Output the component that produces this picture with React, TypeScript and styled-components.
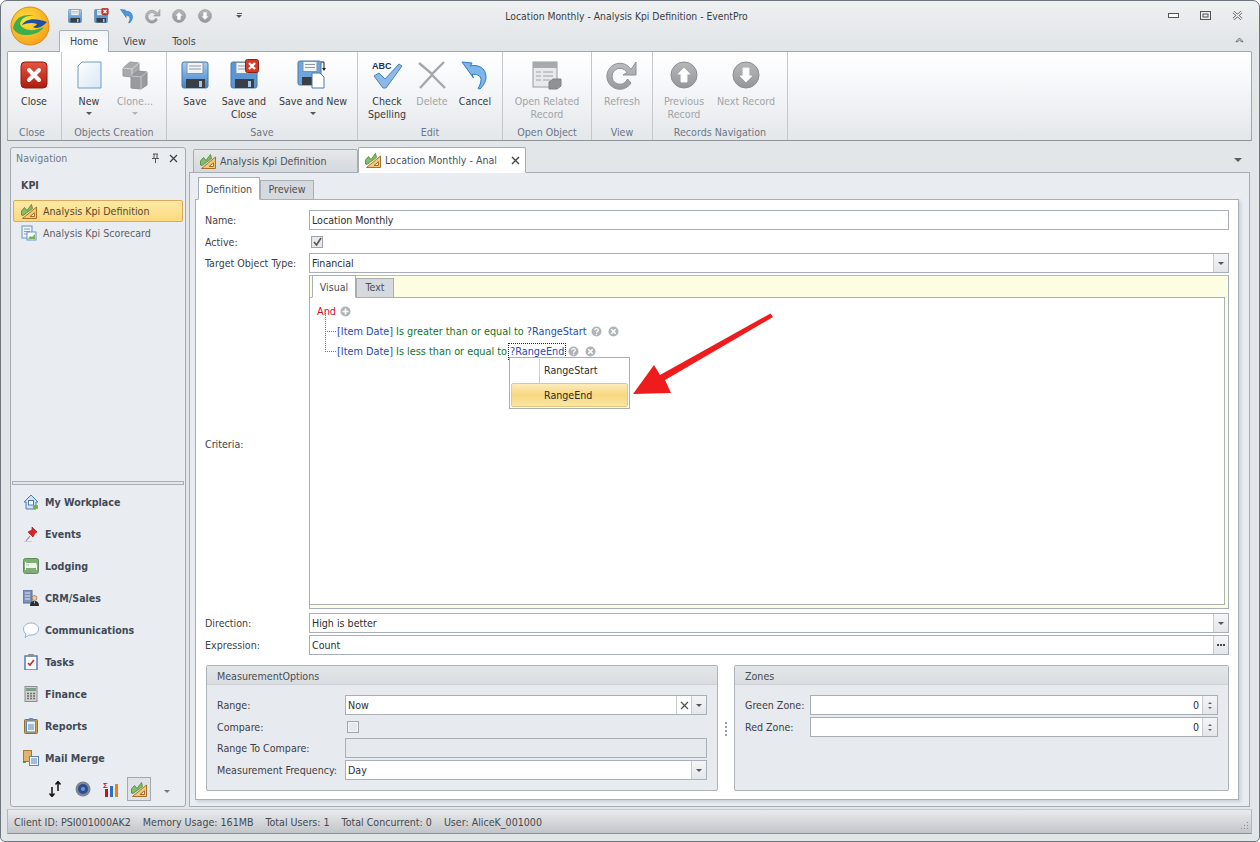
import React from "react";
import styled, { createGlobalStyle } from "styled-components";

const Global = createGlobalStyle`
  html, body { margin: 0; padding: 0; background: #fff; }
  body { font-family: "DejaVu Sans", "Liberation Sans", Arial, sans-serif; font-stretch: condensed; font-size: 10.6px; color: #3c3c3c; }
  * { box-sizing: border-box; }
`;

const Window = styled.div`
  position: relative; width: 1260px; height: 842px; overflow: hidden; display: flex; flex-direction: column;
  background: linear-gradient(#eef0f1 0, #e3e6e9 40px); border: 1px solid #6f757c; border-radius: 7px 7px 5px 5px;
`;
const TitleBar = styled.div`
  height: 29px; flex: none; display: grid; grid-template-columns: 1fr auto 1fr; align-items: center; padding-right: 7px;
`;
const Quick = styled.div`display: flex; align-items: center; gap: 10px; padding-left: 66px;`;
const QuickSlot = styled.span`width: 16px; height: 16px; display: block; & > svg { display: block; }`;
const QuickMenu = styled.span`
  margin-left: 8px; width: 16px; height: 16px; display: flex; flex-direction: column; align-items: center; justify-content: center; gap: 1px;
  &::before { content: ""; width: 5px; height: 1px; background: #555; }
  &::after { content: ""; border: 3px solid transparent; border-top-color: #555; border-bottom: 0; }
`;
const Title = styled.div`color: #3e3e3e; text-align: center; font-size: 10.3px;`;
const WinButtons = styled.div`display: flex; justify-content: flex-end; gap: 21px; padding-right: 9px; align-items: center;`;
const Logo = styled.svg`position: absolute; left: 9px; top: 5px; width: 40px; height: 40px;`;

const TabStrip = styled.div`
  height: 21px; flex: none; display: flex; padding-left: 58px; padding-right: 15px; position: relative; z-index: 1;
`;
const RibbonTab = styled.div<{ $on?: boolean; $w: number }>`
  width: ${p => p.$w}px; text-align: center; line-height: 23px; height: ${p => (p.$on ? 22 : 21)}px; color: #3b4654;
  ${p => p.$on && "background: linear-gradient(#f2f4f6, #fff); border: 1px solid #a9afb6; border-bottom: 0; border-radius: 2px 2px 0 0; line-height: 21px;"}
`;
const Collapse = styled.svg`margin-left: auto; margin-top: 6px;`;
const Ribbon = styled.div`
  height: 90px; flex: none; margin: 0 7px 0 6px; display: flex; border: 1px solid #a3a8ae; border-bottom-color: #8f959b; border-radius: 2px 2px 0 0;
  background: linear-gradient(#fff 0, #f8f9fb 30%, #e4e7ea 100%);
`;
const Group = styled.div<{ $w: number; $first?: boolean }>`
  width: ${p => p.$w}px; flex: none; display: flex; flex-direction: column; border-right: 1px solid #c4c8cd;
  padding-left: ${p => (p.$first ? 0 : 5)}px;
`;
const GroupButtons = styled.div`display: flex; height: 73px; flex: none;`;
const GroupLabel = styled.div`height: 14px; text-align: center; color: #6a7686; line-height: 14px; margin-left: -5px;`;
const BigButton = styled.div<{ $w: number; $off?: boolean }>`
  width: ${p => p.$w}px; flex: none; display: flex; flex-direction: column; align-items: center; padding-top: 7px;
  color: ${p => (p.$off ? "#a1a4a8" : "#3a3a3a")}; line-height: 13px; text-align: center;
`;
const BigIcon = styled.div`width: 32px; height: 32px; margin-bottom: 4px; & > svg { display: block; }`;
const DropCaret = styled.span<{ $off?: boolean; $c?: string }>`
  display: block; width: 0; height: 0; margin-top: 4px; border: 3px solid transparent; border-bottom: 0; border-top-color: ${p => p.$c || (p.$off ? "#b0b3b7" : "#555")};
`;

const Middle = styled.div`flex: 1; min-height: 0; display: flex; padding: 6px 9px 2px 9px; gap: 3px;`;
const NavPanel = styled.div`
  width: 176px; flex: none; display: flex; flex-direction: column; background: #e9ecf1; border: 1px solid #a5abb2; border-radius: 3px;
`;
const NavHead = styled.div`height: 20px; display: flex; align-items: center; padding: 0 7px 0 5px; gap: 9px; color: #727b87;`;
const NavTitle = styled.span`flex: 1;`;
const NavCategory = styled.div`font-weight: bold; color: #44494f; padding: 10px 0 0 10px; height: 32px; line-height: 15px;`;
const NavItem = styled.div<{ $on?: boolean }>`
  height: 22px; margin: 0 2px; display: flex; align-items: center; gap: 6px; padding-left: 7px; color: #5a5f66; border: 1px solid transparent; border-radius: 2px;
  ${p => p.$on && "background: linear-gradient(#fde9a6, #fdd97e); border-color: #d9ab55; color: #544a30;"}
`;
const NavSpacer = styled.div`flex: 1;`;
const NavSplitter = styled.div`height: 4px; margin: 0 1px 1px 1px; border: 1px solid #a9afb6; background: #e3e6ea;`;
const NavBig = styled.div`height: 32px; display: flex; align-items: center; padding-left: 12px; gap: 6px; font-weight: bold; color: #414a57; & > svg { flex: none; }`;
const NavTools = styled.div`height: 30px; display: flex; align-items: center; padding-left: 32px; gap: 4px; margin-bottom: 2px;`;
const NavToolOn = styled.span`width: 24px; height: 24px; display: flex; align-items: center; justify-content: center; border: 1px solid #a3a9b0; background: #dfe2e6;`;
const NavToolSlot = styled.span`width: 24px; height: 24px; display: flex; align-items: center; justify-content: center;`;

const Main = styled.div`flex: 1; min-width: 0; display: flex; flex-direction: column;`;
const DocTabs = styled.div`height: 26px; flex: none; display: flex; align-items: flex-end; padding-left: 4px; padding-right: 8px; position: relative; z-index: 1; margin-bottom: -1px;`;
const DocTab = styled.div<{ $on?: boolean; $w: number }>`
  width: ${p => p.$w}px; height: ${p => (p.$on ? 26 : 24)}px; display: flex; align-items: center; gap: 4px; padding-left: 6px; color: #4c5157; flex: none;
  border: 1px solid #a6acb3; border-radius: 2px 2px 0 0; background: ${p => (p.$on ? "#fff" : "linear-gradient(#e6e8ea, #d5d8dc)")};
  ${p => p.$on && "border-bottom-color: #fff;"}
`;
const TabClose = styled.svg`margin-left: auto; margin-right: 5px;`;
const Caret = styled.span`margin-left: auto; margin-bottom: 11px; width: 0; height: 0; border: 4px solid transparent; border-bottom: 0; border-top-color: #5a5f66;`;
const DocPage = styled.div`flex: 1; min-height: 0; display: flex; flex-direction: column; border: 1px solid #a6acb3; background: #e9ecf1; padding: 5px 10px 6px 5px;`;
const SubTabs = styled.div`height: 22px; flex: none; display: flex; align-items: flex-end; padding-left: 3px; margin-bottom: -1px; position: relative; z-index: 1;`;
const SubTab = styled.div<{ $on?: boolean; $w: number }>`
  width: ${p => p.$w}px; height: ${p => (p.$on ? 23 : 20)}px; text-align: center; line-height: ${p => (p.$on ? 23 : 17)}px; color: #4a5058; flex: none;
  border: 1px solid #a9afb6; background: ${p => (p.$on ? "#fff" : "#d6d9de")}; ${p => p.$on && "border-bottom-color: #fff;"}
`;
const Page = styled.div`
  flex: 1; min-height: 0; display: flex; flex-direction: column; background: #fff; border: 1px solid #a9afb6; padding: 10px 9px 9px 9px;
  box-shadow: 2px 2px 3px rgba(120,128,138,.25);
`;
const Row = styled.div<{ $h?: number; $mt?: number }>`
  display: flex; align-items: center; height: ${p => p.$h ?? 20}px; flex: none; margin-top: ${p => p.$mt ?? 0}px;
`;
const Label = styled.div<{ $w?: number; $pt?: number }>`width: ${p => p.$w ?? 104}px; flex: none; color: #3e4145; padding-top: ${p => p.$pt ?? 0}px;`;
const Field = styled.div<{ $off?: boolean }>`
  flex: 1; min-width: 0; height: 20px; display: flex; align-items: stretch; border: 1px solid #a9afb6; background: ${p => (p.$off ? "#e6e9ed" : "#fff")};
`;
const Value = styled.div<{ $right?: boolean }>`flex: 1; line-height: 18px; padding: 0 ${p => (p.$right ? 3 : 2)}px; color: #2e2e2e; text-align: ${p => (p.$right ? "right" : "left")};`;
const FieldBtn = styled.div`
  width: 15px; flex: none; border-left: 1px solid #c6cbd1; background: linear-gradient(#f4f5f7, #e3e6ea); display: flex; flex-direction: column; align-items: center; justify-content: center; gap: 3px; color: #555;
`;
const FieldBtnPlain = styled(FieldBtn)`background: #fff; border-left: 1px solid #c6cbd1;`;
const BtnCaret = styled.span`width: 0; height: 0; border: 3px solid transparent; border-bottom: 0; border-top-color: #555;`;
const BtnCaretUp = styled.span`width: 0; height: 0; border: 2px solid transparent; border-top: 0; border-bottom-color: #666;`;
const BtnCaretDown = styled.span`width: 0; height: 0; border: 2px solid transparent; border-bottom: 0; border-top-color: #666;`;
const Dots = styled.div`display: flex; gap: 1px; & > i { width: 2px; height: 2px; background: #444; }`;
const Check = styled.span<{ $off?: boolean }>`
  width: 12px; height: 12px; margin-left: 2px; flex: none; border: 1px solid #9fa5ac; background: ${p => (p.$off ? "#e6e9ed" : "#e8e9eb")}; display: flex; align-items: center; justify-content: center;
  ${p => p.$off && "box-shadow: inset 0 0 0 1px #f4f5f6;"}
`;

const Criteria = styled.div`
  flex: 1; min-width: 0; height: 334px; display: flex; flex-direction: column; background: #fdfde2; border: 1px solid #a9afb6; border-top-color: #b9bdc3;
`;
const CritTabs = styled.div`height: 22px; flex: none; display: flex; align-items: flex-end; padding-left: 2px; margin-bottom: -1px; position: relative; z-index: 1;`;
const CritBody = styled.div`
  flex: 1; position: relative; margin-right: 3px; margin-bottom: 3px; background: #fff; border: 1px solid #a9afb6; padding: 3px 0 0 7px; border-left: 0;
`;
const TreeRow = styled.div<{ $child?: boolean }>`
  height: 20px; display: flex; align-items: center; white-space: pre; font-size: 10.8px; ${p => p.$child && "padding-left: 20px; position: relative;"}
  ${p => p.$child && `&::before { content: ""; position: absolute; left: 8px; top: -12px; width: 10px; height: 22px; border-left: 1px dotted #777; border-bottom: 1px dotted #777; }`}
`;
const Logic = styled.span`color: #c8102e;`;
const FieldName = styled.span`color: #2a4bb0;`;
const Op = styled.span`color: #11761f;`;
const Param = styled.span<{ $focus?: boolean }>`color: #2a4bb0; ${p => p.$focus && "outline: 1px dotted #222; outline-offset: 1px;"}`;
const TreeBtns = styled.span`display: inline-flex; align-items: center; gap: 6px; margin-left: 4px; & > svg { display: block; }`;
const Popup = styled.div`
  position: absolute; left: 199px; top: 59px; width: 121px; height: 52px; background: #fff; border: 1px solid #a9afb6; padding: 1px; display: flex; flex-direction: column; z-index: 3;
`;
const PopItem = styled.div<{ $on?: boolean }>`
  flex: none; color: #2c2c2c;
  ${p => (p.$on
    ? "height: 24px; line-height: 22px; padding-left: 32px; background: linear-gradient(#fcecbb, #f8d77f 50%, #fae6a6); border: 1px solid #eac877; border-radius: 2px;"
    : "height: 24px; line-height: 23px; padding-left: 33px; background: linear-gradient(#ccd0d5, #ccd0d5) 28px 0 / 1px 100% no-repeat;")}
`;
const Arrow = styled.svg`position: absolute; left: 318px; top: 9px; z-index: 4;`;

const Bottom = styled.div`display: flex; margin-top: 10px; margin-left: 1px; height: 126px; flex: none; align-items: stretch;`;
const Panel = styled.div<{ $w: number }>`
  width: ${p => p.$w}px; flex: none; display: flex; flex-direction: column; background: #e7eaee; border: 1px solid #aeb3ba; border-radius: 2px;
`;
const PanelHead = styled.div`height: 19px; flex: none; line-height: 20px; padding-left: 10px; color: #474d55; background: linear-gradient(#e4e7ea, #d9dde1); border-bottom: 1px solid #cdd1d6;`;
const PanelBody = styled.div`padding: 10px 10px 0 10px; display: flex; flex-direction: column; gap: 2px;`;
const Grip = styled.div`
  width: 16px; flex: none; display: flex; flex-direction: column; align-items: center; justify-content: center; gap: 2px; padding-top: 1px;
  & > i { width: 2px; height: 2px; background: #9a9fa6; }
`;

const Status = styled.div`
  height: 25px; flex: none; margin: 0 7px 7px 6px; display: flex; align-items: center; gap: 12px; padding: 0 0 0 6px; color: #454a50; position: relative;
  background: linear-gradient(#e9ebed, #c2c5c9); border: 1px solid #b3b7bc; border-bottom-color: #8d9197; border-top-color: #c5c9ce;
`;
const GripCorner = styled.svg`position: absolute; right: 2px; bottom: 1px;`;

/* ---------- icons ---------- */
const Floppy = ({ s = 32 }: { s?: number }) => (
  <svg width={s} height={s} viewBox="0 0 32 32">
    <defs><linearGradient id="fl" x1="0" y1="0" x2="0" y2="1"><stop offset="0" stopColor="#a8cdf0" /><stop offset="1" stopColor="#3f82c8" /></linearGradient></defs>
    <rect x="3" y="3" width="26" height="26" rx="2" fill="url(#fl)" stroke="#4a78a8" />
    <rect x="8" y="3.5" width="16" height="11" fill="#f2f4f6" stroke="#7d96ae" />
    <path d="M10 7h12M10 10h12" stroke="#8e9aa6" />
    <rect x="7" y="20" width="19" height="9" fill="#3a3f46" />
    <rect x="20" y="22" width="3" height="6" fill="#a8c7e6" />
  </svg>
);
const XBadge = ({ s = 14, x = 18, y = 0 }: { s?: number; x?: number; y?: number }) => (
  <g transform={`translate(${x} ${y}) scale(${s / 14})`}>
    <rect x=".5" y=".5" width="13" height="13" rx="2" fill="#d43a28" stroke="#8e1f14" />
    <path d="M4 4l6 6M10 4l-6 6" stroke="#fff" strokeWidth="2.4" />
  </g>
);
const FloppyX = ({ s = 32 }: { s?: number }) => (
  <svg width={s} height={s} viewBox="0 0 32 32">
    <rect x="3" y="3" width="26" height="26" rx="2" fill="#5b95d2" stroke="#4a78a8" />
    <rect x="8" y="3.5" width="13" height="11" fill="#f2f4f6" stroke="#7d96ae" />
    <path d="M10 7h10M10 10h10" stroke="#8e9aa6" />
    <rect x="7" y="20" width="19" height="9" fill="#3a3f46" />
    <rect x="20" y="22" width="3" height="6" fill="#a8c7e6" />
    <XBadge x={17} y={0} />
  </svg>
);
const FloppyNew = () => (
  <svg width="32" height="32" viewBox="0 0 32 32">
    <rect x="1" y="2" width="23" height="24" rx="2" fill="#6ea5dc" stroke="#4a78a8" />
    <rect x="6" y="2.5" width="14" height="10" fill="#f2f4f6" stroke="#7d96ae" />
    <path d="M8 5.500h10M8 8.500h10" stroke="#8e9aa6" />
    <rect x="5" y="18" width="15" height="8" fill="#3a3f46" />
    <path d="M15 14h8l4 4v11H15z" fill="#fff" stroke="#4a78a8" />
    <path d="M27 3v7" stroke="#222" /><path d="M25 9l2 3 2-3z" fill="#222" /><path d="M24 3h3" stroke="#222" />
  </svg>
);
const Undo = ({ s = 32, c1 = "#7cb6ea", c2 = "#2f78c6" }: { s?: number; c1?: string; c2?: string }) => (
  <svg width={s} height={s} viewBox="0 0 32 32">
    <path d="M3 3l10 1-1.500 3C19 5 27 9 27 18c0 5-3 9-6 12l-2-.5c2-3 3-6 3-9 0-4-5-6-9-5l1.500 3.500z" fill={c1} stroke={c2} strokeWidth="1" strokeLinejoin="round" />
  </svg>
);
const Redo = ({ s = 32 }: { s?: number }) => (
  <svg width={s} height={s} viewBox="0 0 32 32">
    <defs><linearGradient id="rd" x1="0" y1="0" x2="0" y2="1"><stop offset="0" stopColor="#bcbec0" /><stop offset="1" stopColor="#97999c" /></linearGradient></defs>
    <path d="M25 10.500A13 13 0 1 0 25 24l-3.500-4A8 8 0 1 1 21 13.500L17 16h13V3z" fill="url(#rd)" stroke="#8d9094" strokeLinejoin="round" />
  </svg>
);
const RoundArrow = ({ s = 32, up }: { s?: number; up?: boolean }) => (
  <svg width={s} height={s} viewBox="0 0 32 32">
    <defs><linearGradient id="ra" x1="0" y1="0" x2="0" y2="1"><stop offset="0" stopColor="#b7b8ba" /><stop offset="1" stopColor="#949699" /></linearGradient></defs>
    <circle cx="16" cy="16" r="13" fill="url(#ra)" stroke="#8b8d90" />
    <path d={up ? "M16 9l6 6H19V23h-6v-8H10z" : "M16 23l6-6H19V9h-6v8H10z"} fill="#fff" stroke="#f2f2f2" strokeLinejoin="round" />
  </svg>
);
const CloseBig = () => (
  <svg width="32" height="32" viewBox="0 0 32 32">
    <defs><linearGradient id="cb" x1="0" y1="0" x2="0" y2="1"><stop offset="0" stopColor="#e8553f" /><stop offset="1" stopColor="#ad1c10" /></linearGradient></defs>
    <rect x="3" y="3" width="26" height="26" rx="4" fill="url(#cb)" stroke="#8c1d12" />
    <path d="M11 11l10 10M21 11L11 21" stroke="#fff" strokeWidth="4" strokeLinecap="round" />
  </svg>
);
const NewDoc = () => (
  <svg width="32" height="32" viewBox="0 0 32 32">
    <defs><linearGradient id="nd" x1="0" y1="0" x2="1" y2="1"><stop offset="0" stopColor="#fff" /><stop offset="1" stopColor="#d7e6f5" /></linearGradient></defs>
    <path d="M9 3h19v26H5V7z" fill="url(#nd)" stroke="#6f9cc9" />
  </svg>
);
const Cubes = () => (
  <svg width="32" height="32" viewBox="0 0 32 32">
    <path d="M4 9l7-6 9 1v8l-7 6-9-1z" fill="#a7a9ab" stroke="#9a9c9f" />
    <path d="M4 9l9 1 7-6M13 10v8" stroke="#d6d7d9" fill="none" />
    <path d="M12 17l7-5 9 1v13l-6 4-10-1z" fill="#989a9d" stroke="#8d8f92" />
    <path d="M12 17l10 1 6-5M22 18v12" stroke="#c5c6c9" fill="none" />
  </svg>
);
const SpellText = styled.text`font: bold 9px "Liberation Sans", sans-serif; fill: #1f3558;`;
const Spell = () => (
  <svg width="32" height="32" viewBox="0 0 32 32">
    <SpellText x="1" y="10">ABC</SpellText>
    <path d="M3 17l5-3 6 6L28 5l3 2-16 22h-3z" fill="#8db9e6" stroke="#4d82bd" strokeLinejoin="round" />
  </svg>
);
const BigX = () => (
  <svg width="32" height="32" viewBox="0 0 32 32">
    <path d="M3 4l13 11L28 3M4 29l12-13 13 13" fill="none" stroke="#a5a7aa" strokeWidth="2.400" />
  </svg>
);
const Form = () => (
  <svg width="32" height="32" viewBox="0 0 32 32">
    <rect x="2" y="3" width="24" height="25" fill="#e8e9ea" stroke="#9a9c9f" />
    <rect x="2" y="3" width="24" height="6" fill="#a7a9ac" />
    <path d="M5 13h5M12 13h10M5 17h5M12 17h10M5 21h5M12 21h7" stroke="#a0a2a5" />
    <path d="M18 23l4-3h8v7l-4 3h-8z" fill="#8f9194" stroke="#7f8184" />
  </svg>
);
const Kpi = ({ s = 16 }: { s?: number }) => (
  <svg width={s} height={s} viewBox="0 0 16 16">
    <path d="M1.500 15.500L15.500 4v11.500z" fill="#f3c873" stroke="#a9702a" />
    <path d="M9 13.500l4.500-3.700v3.700z" fill="#fff3cf" stroke="#a9702a" />
    <path d="M.5 8L3.500 4.500 6 7.500 10.500 1.500 11.500 5.500 2 12.500.5 12z" fill="#86bd6c" stroke="#47852f" strokeWidth=".8" strokeLinejoin="round" />
  </svg>
);
const Scorecard = () => (
  <svg width="16" height="16" viewBox="0 0 16 16">
    <rect x="1" y="1" width="10" height="12" fill="#eaf2fb" stroke="#6b93bf" />
    <path d="M3 4h6M3 6.500h6M3 9h4" stroke="#7ea3c9" />
    <rect x="6" y="7" width="9" height="8" fill="#fff" stroke="#6b93bf" />
    <path d="M7 14l2-3 2 1 3-3v5z" fill="#76b25e" />
  </svg>
);
const House = () => (
  <svg width="16" height="16" viewBox="0 0 16 16">
    <path d="M1 8l7-7 7 7h-2v7H3V8z" fill="#cfe0f2" stroke="#4f7eb0" strokeLinejoin="round" />
    <rect x="5.500" y="6.500" width="5" height="4.500" fill="#fff" stroke="#4f7eb0" />
    <rect x="10" y="11" width="5" height="4" rx="1" fill="#6fb24f" />
  </svg>
);
const Pin = () => (
  <svg width="16" height="16" viewBox="0 0 16 16">
    <path d="M3 15l4-5" stroke="#8a8a8a" strokeWidth="1.200" />
    <path d="M9 1l5 5-2 1-2 4-5-5 4-2z" fill="#d8232a" stroke="#a51519" strokeWidth=".7" strokeLinejoin="round" />
    <path d="M1 15.500h8" stroke="#ccd0d5" />
  </svg>
);
const Bed = () => (
  <svg width="16" height="16" viewBox="0 0 16 16">
    <rect x=".5" y=".5" width="15" height="15" rx="2" fill="#7fae74" stroke="#5e8b56" />
    <rect x="2.500" y="5" width="11" height="5" fill="#eef4ec" />
    <path d="M2.500 4v8M13.500 7v5" stroke="#fff" />
    <rect x="3" y="6" width="3" height="2" fill="#cfe1ca" />
  </svg>
);
const Crm = () => (
  <svg width="16" height="16" viewBox="0 0 16 16">
    <rect x="0" y="0" width="9" height="13" fill="#7f93c2" stroke="#5b6a8f" />
    <path d="M2 3h5M2 6h5M2 9h5" stroke="#dfe5f2" />
    <circle cx="11.500" cy="8" r="2.500" fill="#f0c9a0" stroke="#6a4b2b" strokeWidth=".5" />
    <path d="M7 16c0-4 2-5 4.500-5S16 12 16 16z" fill="#2b2d33" />
    <path d="M11 11.500h1l-.5 3z" fill="#fff" />
  </svg>
);
const Bubble = () => (
  <svg width="16" height="16" viewBox="0 0 16 16">
    <path d="M8 1c4 0 7.500 2.500 7.500 6S12 13 8 13H6l-4 2.500L3 12C1.500 11 .5 9 .5 7 .5 3.500 4 1 8 1z" fill="#fff" stroke="#8fb2d6" />
  </svg>
);
const Tasks = () => (
  <svg width="16" height="16" viewBox="0 0 16 16">
    <rect x="2" y="2" width="12" height="14" fill="#fff" stroke="#4777ad" strokeWidth="1.400" />
    <rect x="5" y="0" width="6" height="3" rx="1" fill="#8e8e8e" />
    <path d="M5 9l2 2 4-5" fill="none" stroke="#c8242b" strokeWidth="1.600" />
  </svg>
);
const Calc = () => (
  <svg width="16" height="16" viewBox="0 0 16 16">
    <rect x="2" y="0.500" width="12" height="15" fill="#d0d1d2" stroke="#8c8e91" />
    <rect x="3" y="2" width="10" height="3" fill="#7f9e89" />
    <path d="M4 7.500h2M7 7.500h2M10 7.500h2M4 10h2M7 10h2M10 10h2M4 12.500h2M7 12.500h2M10 12.500h2" stroke="#6d6f72" strokeWidth="1.500" />
  </svg>
);
const Report = () => (
  <svg width="16" height="16" viewBox="0 0 16 16">
    <rect x="1.500" y="1.500" width="13" height="14" rx="1" fill="#d6a33f" stroke="#9a6f1f" />
    <rect x="3.500" y="3" width="9" height="11" fill="#eaf2fb" stroke="#5d86b6" />
    <rect x="6" y="0" width="4" height="3" fill="#6e8fb8" />
    <path d="M5 7h6M5 9h6M5 11h6" stroke="#5d86b6" />
  </svg>
);
const Mail = () => (
  <svg width="16" height="16" viewBox="0 0 16 16">
    <rect x="0.500" y="0.500" width="8" height="11" fill="#e2b36a" stroke="#a67a30" />
    <path d="M1 13v-2M0 12h3" stroke="#3f9a36" strokeWidth="1.400" />
    <rect x="6.500" y="6.500" width="9" height="9" fill="#eef4fb" stroke="#5d86b6" />
    <path d="M8 9h6M8 11h6M8 13h6" stroke="#5d86b6" />
  </svg>
);
const SortArrows = () => (
  <svg width="16" height="16" viewBox="0 0 16 16">
    <path d="M5 6v9M2.500 12.500L5 15.500l2.500-3M11 1v9M8.500 3.500L11 .5l2.500 3" fill="none" stroke="#111" strokeWidth="1.500" />
  </svg>
);
const Orb = () => (
  <svg width="16" height="16" viewBox="0 0 16 16">
    <circle cx="8" cy="8" r="7.500" fill="#7c8794" />
    <circle cx="8" cy="8" r="5" fill="#2d4d8e" />
    <circle cx="8" cy="8" r="2" fill="#6e96d8" />
  </svg>
);
const SigmaText = styled.text`font: bold 8px "Liberation Sans", sans-serif; fill: #c8141c;`;
const Sigma = () => (
  <svg width="16" height="16" viewBox="0 0 16 16">
    <SigmaText x="0" y="7">Σ</SigmaText>
    <rect x="2" y="8" width="3" height="8" fill="#c8141c" />
    <rect x="7" y="5" width="3" height="11" fill="#2f6fc0" />
    <rect x="12" y="3" width="3" height="13" fill="#ee7d1a" />
  </svg>
);
const RoundMark = ({ kind }: { kind: "plus" | "q" | "x" }) => (
  <svg width="11" height="11" viewBox="0 0 11 11">
    <circle cx="5.500" cy="5.500" r="5" fill="#b0b3b6" />
    {kind === "plus" && <path d="M5.500 2.500v6M2.500 5.500h6" stroke="#fff" strokeWidth="1.600" />}
    {kind === "x" && <path d="M3.300 3.300l4.400 4.400M7.700 3.300L3.300 7.700" stroke="#fff" strokeWidth="1.600" />}
    {kind === "q" && <path d="M3.800 4.200c0-2.200 3.500-2.200 3.500 0 0 1.400-1.800 1.300-1.800 2.600M5.500 7.800v1.200" fill="none" stroke="#fff" strokeWidth="1.300" />}
  </svg>
);
const XThin = ({ c = "#555" }: { c?: string }) => (
  <svg width="9" height="9" viewBox="0 0 9 9"><path d="M1 1l7 7M8 1L1 8" stroke={c} strokeWidth="1.300" /></svg>
);
const XOutline = () => (
  <svg width="11" height="9" viewBox="0 0 11 9">
    <path d="M1.500 1l8 7M9.500 1l-8 7" stroke="#555" strokeWidth="2.600" />
    <path d="M1.500 1l8 7M9.500 1l-8 7" stroke="#fff" strokeWidth="1.200" />
  </svg>
);

const tools = [
  { key: "s", n: <Floppy s={16} /> },
  { key: "x", n: <FloppyX s={16} /> },
  { key: "u", n: <Undo s={16} c1="#4f97dc" c2="#1f63ad" /> },
  { key: "r", n: <Redo s={16} /> },
  { key: "a", n: <RoundArrow s={16} up /> },
  { key: "d", n: <RoundArrow s={16} /> },
];

type Btn = { lines: string[]; w: number; icon: React.ReactNode; off?: boolean; drop?: boolean };
const groups: { label: string; w: number; first?: boolean; btns: Btn[] }[] = [
  { label: "Close", w: 54, first: true, btns: [{ lines: ["Close"], w: 52, icon: <CloseBig /> }] },
  { label: "Objects Creation", w: 105, btns: [
    { lines: ["New"], w: 44, icon: <NewDoc />, drop: true },
    { lines: ["Clone..."], w: 48, icon: <Cubes />, off: true, drop: true },
  ] },
  { label: "Save", w: 191, btns: [
    { lines: ["Save"], w: 46, icon: <Floppy /> },
    { lines: ["Save and", "Close"], w: 52, icon: <FloppyX /> },
    { lines: ["Save and New"], w: 86, icon: <FloppyNew />, drop: true },
  ] },
  { label: "Edit", w: 145, btns: [
    { lines: ["Check", "Spelling"], w: 48, icon: <Spell /> },
    { lines: ["Delete"], w: 42, icon: <BigX />, off: true },
    { lines: ["Cancel"], w: 44, icon: <Undo /> },
  ] },
  { label: "Open Object", w: 89, btns: [{ lines: ["Open Related", "Record"], w: 78, icon: <Form />, off: true }] },
  { label: "View", w: 61, btns: [{ lines: ["Refresh"], w: 50, icon: <Redo />, off: true }] },
  { label: "Records Navigation", w: 135, btns: [
    { lines: ["Previous", "Record"], w: 52, icon: <RoundArrow up />, off: true },
    { lines: ["Next Record"], w: 72, icon: <RoundArrow />, off: true },
  ] },
];

const navBig = [
  { t: "My Workplace", i: <House /> }, { t: "Events", i: <Pin /> }, { t: "Lodging", i: <Bed /> },
  { t: "CRM/Sales", i: <Crm /> }, { t: "Communications", i: <Bubble /> }, { t: "Tasks", i: <Tasks /> },
  { t: "Finance", i: <Calc /> }, { t: "Reports", i: <Report /> }, { t: "Mail Merge", i: <Mail /> },
];

const Combo = ({ value }: { value: string }) => (
  <Field><Value>{value}</Value><FieldBtn><BtnCaret /></FieldBtn></Field>
);
const Spin = () => (
  <Field><Value $right>0</Value><FieldBtn><BtnCaretUp /><BtnCaretDown /></FieldBtn></Field>
);

export default function App() {
  return (
    <>
      <Global />
      <Window>
        <Logo viewBox="0 0 40 40">
          <defs><radialGradient id="lg" cx=".4" cy=".35" r=".75"><stop offset="0" stopColor="#ffe23a" /><stop offset="1" stopColor="#f39a1a" /></radialGradient></defs>
          <circle cx="20" cy="20" r="19" fill="url(#lg)" stroke="#d98a1c" />
          <path d="M3 22C5 10 16 7 25 10c-8-1-14 2-15 8 3 7 14 8 24 3-5 9-26 12-31 1z" fill="#3fae49" />
          <path d="M12 19c3-6 12-8 25-3-6 6-10 7-14 5 2-1 4-2 4-3-5-2-10-1-15 1z" fill="#1f4fa5" />
        </Logo>
        <TitleBar>
          <Quick>
            {tools.map(t => <QuickSlot key={t.key}>{t.n}</QuickSlot>)}
            <QuickMenu />
          </Quick>
          <Title>Location Monthly - Analysis Kpi Definition - EventPro</Title>
          <WinButtons>
            <svg width="11" height="6" viewBox="0 0 11 6"><rect x=".5" y=".5" width="10" height="4" fill="#fff" stroke="#555" /></svg>
            <svg width="11" height="9" viewBox="0 0 11 9"><rect x=".5" y=".5" width="10" height="8" fill="none" stroke="#555" /><rect x="3" y="3" width="5" height="3" fill="none" stroke="#555" /></svg>
            <XOutline />
          </WinButtons>
        </TitleBar>
        <TabStrip>
          <RibbonTab $on $w={50}>Home</RibbonTab>
          <RibbonTab $w={51}>View</RibbonTab>
          <RibbonTab $w={48}>Tools</RibbonTab>
          <Collapse width="9" height="7" viewBox="0 0 9 7"><path d="M1 5.500l3.500-3.500L8 5.500l-1 .5-2.500-2L2 6z" fill="#fff" stroke="#444" strokeWidth=".8" /></Collapse>
        </TabStrip>
        <Ribbon>
          {groups.map(g => (
            <Group key={g.label} $w={g.w} $first={g.first}>
              <GroupButtons>
                {g.btns.map(b => (
                  <BigButton key={b.lines[0]} $w={b.w} $off={b.off}>
                    <BigIcon>{b.icon}</BigIcon>
                    {b.lines.map(l => <div key={l}>{l}</div>)}
                    {b.drop && <DropCaret $off={b.off} />}
                  </BigButton>
                ))}
              </GroupButtons>
              <GroupLabel>{g.label}</GroupLabel>
            </Group>
          ))}
        </Ribbon>
        <Middle>
          <NavPanel>
            <NavHead>
              <NavTitle>Navigation</NavTitle>
              <svg width="9" height="10" viewBox="0 0 9 10"><path d="M2 1h5M3 1v4M6 1v4M1 5.500h7M4.500 6v4" stroke="#555" fill="none" /></svg>
              <XThin c="#444" />
            </NavHead>
            <NavCategory>KPI</NavCategory>
            <NavItem $on><Kpi />Analysis Kpi Definition</NavItem>
            <NavItem><Scorecard />Analysis Kpi Scorecard</NavItem>
            <NavSpacer />
            <NavSplitter />
            {navBig.map(n => <NavBig key={n.t}>{n.i}{n.t}</NavBig>)}
            <NavTools>
              <NavToolSlot><SortArrows /></NavToolSlot>
              <NavToolSlot><Orb /></NavToolSlot>
              <NavToolSlot><Sigma /></NavToolSlot>
              <NavToolOn><Kpi /></NavToolOn>
              <NavToolSlot><DropCaret $c="#777" /></NavToolSlot>
            </NavTools>
          </NavPanel>
          <Main>
            <DocTabs>
              <DocTab $w={165}><Kpi />Analysis Kpi Definition</DocTab>
              <DocTab $on $w={168}><Kpi />Location Monthly - Anal<TabClose width="9" height="9" viewBox="0 0 9 9"><path d="M1 1l7 7M8 1L1 8" stroke="#444" strokeWidth="1.400" /></TabClose></DocTab>
              <Caret />
            </DocTabs>
            <DocPage>
              <SubTabs>
                <SubTab $on $w={62}>Definition</SubTab>
                <SubTab $w={54}>Preview</SubTab>
              </SubTabs>
              <Page>
                <Row><Label>Name:</Label><Field><Value>Location Monthly</Value></Field></Row>
                <Row $mt={2} $h={19}><Label>Active:</Label><Check>
                  <svg width="9" height="9" viewBox="0 0 9 9"><path d="M1 5l2.500 3L8 1" fill="none" stroke="#555" strokeWidth="1.600" /></svg>
                </Check></Row>
                <Row $mt={2}><Label>Target Object Type:</Label><Combo value="Financial" /></Row>
                <Row $mt={2} $h={334}>
                  <Label $pt={3}>Criteria:</Label>
                  <Criteria>
                    <CritTabs>
                      <SubTab $on $w={44}>Visual</SubTab>
                      <SubTab $w={38}>Text</SubTab>
                    </CritTabs>
                    <CritBody>
                      <TreeRow><Logic>And</Logic><TreeBtns><RoundMark kind="plus" /></TreeBtns></TreeRow>
                      <TreeRow $child>
                        <FieldName>[Item Date]</FieldName><Op> Is greater than or equal to </Op><Param>?RangeStart</Param>
                        <TreeBtns><RoundMark kind="q" /><RoundMark kind="x" /></TreeBtns>
                      </TreeRow>
                      <TreeRow $child>
                        <FieldName>[Item Date]</FieldName><Op> Is less than or equal to </Op><Param $focus>?RangeEnd</Param>
                        <TreeBtns><RoundMark kind="q" /><RoundMark kind="x" /></TreeBtns>
                      </TreeRow>
                      <Popup>
                        <PopItem>RangeStart</PopItem>
                        <PopItem $on>RangeEnd</PopItem>
                      </Popup>
                      <Arrow width="145" height="90" viewBox="0 0 145 90">
                        <path d="M142.500 6.500L145 10 37 73l6 13-38 1L26 58l6 10z" fill="#ee1c1c" />
                      </Arrow>
                    </CritBody>
                  </Criteria>
                </Row>
                <Row $mt={4}><Label>Direction:</Label><Combo value="High is better" /></Row>
                <Row $mt={2}><Label>Expression:</Label>
                  <Field><Value>Count</Value><FieldBtn><Dots><i /><i /><i /></Dots></FieldBtn></Field>
                </Row>
                <Bottom>
                  <Panel $w={512}>
                    <PanelHead>MeasurementOptions</PanelHead>
                    <PanelBody>
                      <Row><Label $w={128}>Range:</Label>
                        <Field><Value>Now</Value><FieldBtnPlain><XThin /></FieldBtnPlain><FieldBtn><BtnCaret /></FieldBtn></Field>
                      </Row>
                      <Row $h={19}><Label $w={128}>Compare:</Label><Check $off /></Row>
                      <Row><Label $w={128}>Range To Compare:</Label><Field $off /></Row>
                      <Row><Label $w={128}>Measurement Frequency:</Label><Combo value="Day" /></Row>
                    </PanelBody>
                  </Panel>
                  <Grip><i /><i /><i /><i /></Grip>
                  <Panel $w={495}>
                    <PanelHead>Zones</PanelHead>
                    <PanelBody>
                      <Row><Label $w={65}>Green Zone:</Label><Spin /></Row>
                      <Row><Label $w={65}>Red Zone:</Label><Spin /></Row>
                    </PanelBody>
                  </Panel>
                </Bottom>
              </Page>
            </DocPage>
          </Main>
        </Middle>
        <Status>
          <span>Client ID: PSI001000AK2</span>
          <span>Memory Usage: 161MB</span>
          <span>Total Users: 1</span>
          <span>Total Concurrent: 0</span>
          <span>User: AliceK_001000</span>
          <GripCorner width="11" height="11" viewBox="0 0 11 11"><path d="M9 1h1v1H9zM6 4h1v1H6zM9 4h1v1H9zM3 7h1v1H3zM6 7h1v1H6zM9 7h1v1H9z" fill="#8d9197" /></GripCorner>
        </Status>
      </Window>
    </>
  );
}
